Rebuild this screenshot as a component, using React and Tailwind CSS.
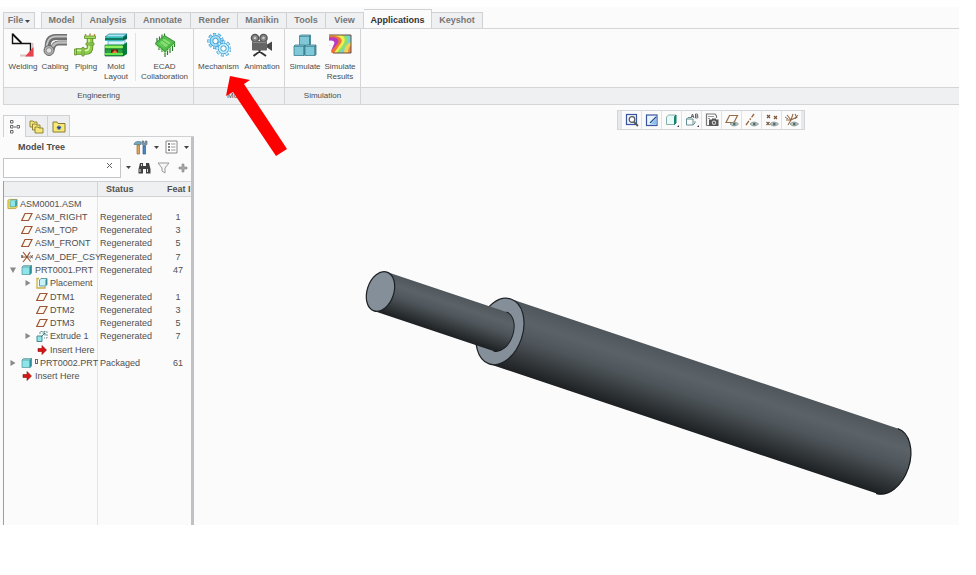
import React, { useState } from "react";

const ribbonTabs = [
  { name: "Model", width: "w-[41px]" },
  { name: "Analysis", width: "w-[53px]" },
  { name: "Annotate", width: "w-[56px]" },
  { name: "Render", width: "w-[47px]" },
  { name: "Manikin", width: "w-[49px]" },
  { name: "Tools", width: "w-[39px]" },
  { name: "View", width: "w-[38px]" },
  { name: "Applications", width: "w-[68px]" },
  { name: "Keyshot", width: "w-[51px]" },
];

const treeRows = [
  { level: 0, icon: "asm", name: "ASM0001.ASM", status: "", feat: "" },
  { level: 1, icon: "plane", name: "ASM_RIGHT", status: "Regenerated", feat: "1" },
  { level: 1, icon: "plane", name: "ASM_TOP", status: "Regenerated", feat: "3" },
  { level: 1, icon: "plane", name: "ASM_FRONT", status: "Regenerated", feat: "5" },
  { level: 1, icon: "csys", name: "ASM_DEF_CSY", status: "Regenerated", feat: "7" },
  { level: 1, icon: "part", name: "PRT0001.PRT", status: "Regenerated", feat: "47", open: true },
  { level: 2, icon: "placement", name: "Placement", status: "", feat: "", open: false },
  { level: 2, icon: "plane", name: "DTM1", status: "Regenerated", feat: "1" },
  { level: 2, icon: "plane", name: "DTM2", status: "Regenerated", feat: "3" },
  { level: 2, icon: "plane", name: "DTM3", status: "Regenerated", feat: "5" },
  { level: 2, icon: "extrude", name: "Extrude 1", status: "Regenerated", feat: "7", open: false },
  { level: 2, icon: "insert", name: "Insert Here", status: "", feat: "" },
  { level: 1, icon: "part", name: "PRT0002.PRT", status: "Packaged", feat: "61", open: false, packaged: true },
  { level: 1, icon: "insert", name: "Insert Here", status: "", feat: "" },
];

/* ---------- ribbon icons (24 x 24) ---------- */

const WeldingIcon = () => (
  <svg viewBox="0 0 24 24" className="h-6 w-6">
    <path d="M1.5 0.500V10.500H19.500V21" fill="none" stroke="#111" strokeWidth="1.400" />
    <path d="M1.500 1L10.500 10" stroke="#111" strokeWidth="1.800" />
    <path d="M21.500 10V22.500H9" fill="none" stroke="#d8c6c6" strokeWidth="2" />
    <path d="M22.500 14V23.500H14Z" fill="#e8434c" />
  </svg>
);

const CablingIcon = () => (
  <svg viewBox="0 0 24 24" className="h-6 w-6">
    <path d="M24 4H13C6 4 4.500 8 4.500 17" fill="none" stroke="#6e6e6e" strokeWidth="6" />
    <path d="M24 3.500H13C6 3.500 3.500 8 3.500 17" fill="none" stroke="#c4c4c4" strokeWidth="2" />
    <path d="M24 10H16C11.500 10 10 12.500 9 17" fill="none" stroke="#707070" strokeWidth="5" />
    <path d="M24 9.500H16C12 9.500 10 12 8 16" fill="none" stroke="#bdbdbd" strokeWidth="2.500" />
    <circle cx="6" cy="17.500" r="5" fill="#b0b0b0" stroke="#666" />
    <circle cx="6" cy="17.500" r="2.800" fill="#e1e1e1" stroke="#8b8b8b" />
  </svg>
);

const PipingIcon = () => (
  <svg viewBox="0 0 24 24" className="h-6 w-6">
    <path d="M2 18.500H12C15 18.500 16 17 16 14V4" fill="none" stroke="#5b8f2a" strokeWidth="6.500" />
    <path d="M2 18.500H12C15 18.500 16 17 16 14V4" fill="none" stroke="#8fcf4a" strokeWidth="4.800" />
    <path d="M2 17.500H12C14 17.500 15 16 15 14V4" fill="none" stroke="#d9f7a3" strokeWidth="1.500" />
    <path d="M10.500 3H21.500V5.500H10.500ZM12 10H20V12H12Z" fill="#a6dc62" stroke="#5b8f2a" strokeWidth=".8" />
    <path d="M.5 16H2.500V22H.5ZM8 14.500H10V23H8Z" fill="#a6dc62" stroke="#5b8f2a" strokeWidth=".8" />
    <path d="M11.500 1V3M20.500 1V3M16 .5V3" stroke="#b58a34" strokeWidth="1.400" />
  </svg>
);

const MoldIcon = () => (
  <svg viewBox="0 0 24 24" className="h-6 w-6">
    <path d="M1 4L5 1H23L19 4Z" fill="#a5e8f4" stroke="#087384" strokeWidth=".7" />
    <path d="M1 4H19V8H1Z" fill="#30c6c0" />
    <path d="M19 4L23 1V6L19 8Z" fill="#08706f" />
    <path d="M1 6H19L23 4" fill="none" stroke="#075e3e" strokeWidth="1.500" />
    <path d="M4 8H18L21 7V11L18 12H4Z" fill="#d5f3ff" stroke="#4793b0" strokeWidth=".6" />
    <path d="M1 12H19V16H1Z" fill="#5ee23f" stroke="#147929" strokeWidth=".7" />
    <path d="M19 12L23 9V21L19 23.500Z" fill="#087c39" />
    <path d="M1 16H19V23H1Z" fill="#27a344" stroke="#0b602e" strokeWidth=".7" />
    <path d="M1 14H19" stroke="#c4ff88" />
    <path d="M7 16.500H14V20H7Z" fill="#7a1f0c" />
    <path d="M8 20L11 17L14 20Z" fill="#e57b35" />
    <path d="M1 21H19" stroke="#6ce350" strokeWidth="2" />
  </svg>
);

const EcadIcon = () => (
  <svg viewBox="0 0 24 24" className="h-6 w-6">
    <path d="M4 10V5M6.500 8V3.500M9 6V1.500M11.500 4V0.500M6 14V17M9 16V19M12 17V24M14.500 16V22M17 14V20M19.500 12V18M21.500 9V14" stroke="#2d7b2d" strokeWidth="1.200" />
    <path d="M2 10.500L11.500 2.500L22 9L12 18.500Z" fill="#4fc04a" stroke="#2d7b2d" strokeWidth=".8" />
    <path d="M5.500 10.500L12 5L18.500 9L12 15Z" fill="#86e070" />
    <path d="M6 9L13 15M8.500 7L16 12M11 5L18 9.500" stroke="#3a9f3a" strokeWidth=".7" />
    <path d="M2.500 12L12 20L21.500 10.500" fill="none" stroke="#8ded76" strokeWidth=".9" />
  </svg>
);

const Gear = ({ cx, cy, r, fill }) => (
  <g>
    <circle cx={cx} cy={cy} r={r} fill="none" stroke="#3f9fd3" strokeWidth="3.400" strokeDasharray="2.900 1.700" />
    <circle cx={cx} cy={cy} r={r - 1} fill={fill} stroke="#3f9fd3" strokeWidth="1" />
    <circle cx={cx} cy={cy} r={r} fill="none" stroke={fill} strokeWidth="2" strokeDasharray="2 2.600" strokeDashoffset="-.4" />
    <circle cx={cx} cy={cy} r="2.700" fill="#fbfbfb" stroke="#3f9fd3" strokeWidth="1" />
  </g>
);

const MechanismIcon = () => (
  <svg viewBox="0 0 24 24" className="h-6 w-6">
    <Gear cx={8.5} cy={8} r={6.5} fill="#a3dcf6" />
    <Gear cx={16.5} cy={15.5} r={6.3} fill="#c8effd" />
  </svg>
);

const AnimationIcon = () => (
  <svg viewBox="0 0 24 24" className="h-6 w-6">
    <circle cx="5" cy="5" r="3.600" fill="#858585" stroke="#555" strokeWidth="1.400" />
    <circle cx="13.500" cy="5" r="3.600" fill="#858585" stroke="#555" strokeWidth="1.400" />
    <circle cx="5" cy="5" r="1.300" fill="#ccc" />
    <circle cx="13.500" cy="5" r="1.300" fill="#ccc" />
    <rect x="2" y="8" width="15" height="9.500" rx="1" fill="#666" />
    <path d="M3 9.500H16" stroke="#8b8b8b" />
    <path d="M17 11.500L22 8.500V18L17 14.500Z" fill="#484848" />
    <path d="M9.500 17V20M9.500 18.500L3.500 23M9.500 18.500L16 23" stroke="#333" strokeWidth="2" />
  </svg>
);

const Block = ({ x, y }) => (
  <g stroke="#3b7f8f" strokeWidth=".8">
    <path d={`M${x} ${y + 1}h10v9.500h-10z`} fill="#7fc8d8" />
    <path d={`M${x} ${y + 1}l1 -1h10l-1 1z`} fill="#c3ecf4" />
    <path d={`M${x + 10} ${y + 1}l1 -1v9.500l-1 1z`} fill="#4f9dae" />
  </g>
);

const SimulateIcon = () => (
  <svg viewBox="0 0 24 24" className="h-6 w-6">
    <Block x={6.5} y={2} />
    <Block x={1} y={12} />
    <Block x={12} y={12} />
  </svg>
);

const ResultsIcon = () => (
  <svg viewBox="0 0 24 24" className="h-6 w-6">
    <clipPath id="resultsFrame">
      <rect x="1" y="2" width="22" height="18" />
    </clipPath>
    <g clipPath="url(#resultsFrame)">
      <rect x="1" y="2" width="22" height="18" fill="#6fd3de" />
      <path d="M0 2H17C25 8 16 14 11 21H0Z" fill="#8ee06a" />
      <path d="M0 2H14C21 8 13 13 8 21H0Z" fill="#f3ed52" />
      <path d="M0 3C9 2 16 5 13 10L6 20L0 21Z" fill="#ef7434" />
      <path d="M0 5C7 3 12 6 10 10L6 15L0 20Z" fill="#b93cc0" />
      <path d="M0 8C6 6 8 10 5 12L0 13Z" fill="#fbfbfb" />
      <path d="M0 13L6 11L3 18L4 21H0Z" fill="#fbfbfb" />
      <path d="M16 20C16 13 20 10 24 9V20Z" fill="#f0d455" />
      <path d="M20 20C20 16 21 13 24 12V20Z" fill="#e88a4d" />
    </g>
    <path d="M1 2H23V20H5" fill="none" stroke="#6d4a3c" strokeWidth="1" />
  </svg>
);

/* ---------- model tree icons (12 x 12) ---------- */

const TreeIcon = ({ type }) => {
  const size = type === "asm" ? "h-3 w-[11px] shrink-0" : "h-3 w-3 shrink-0";
  return (
    <svg viewBox="0 0 12 12" className={size}>
      {type === "asm" && (
        <>
          <path d="M1 2L2.500 1H11V9.500L9.500 11H1Z" fill="#f2e064" stroke="#a8942e" strokeWidth=".8" />
          <path d="M3.500 3L5 1.500H10.500V7.500L9 9H3.500Z" fill="#8fe6ea" stroke="#3d9aa0" strokeWidth=".7" />
          <path d="M9 3L10.500 1.500V7.500L9 9Z" fill="#2f8f98" />
        </>
      )}
      {type === "plane" && <path d="M4 2.500H11L7.500 9.500H0.700Z" fill="#fff9f2" stroke="#9a5636" strokeWidth="1.200" />}
      {type === "csys" && (
        <>
          <path d="M6 6L2 1M6 6L9 1M6 6L2 11M6 6L9.500 10.500M6 6H1" stroke="#a3572f" strokeWidth="1.200" />
          <path d="M5 6H10M9.500 4L12 7.500M12 4L9.500 7.500M0 4L2 7M0 7L2 4" stroke="#5a4a43" strokeWidth=".8" />
        </>
      )}
      {type === "part" && (
        <>
          <path d="M1 3L2.500 1.500H10.500L9 3Z" fill="#d5fbfb" stroke="#4a979c" strokeWidth=".7" />
          <path d="M1 3H9V10.500H1Z" fill="#8ee4e8" stroke="#4a979c" strokeWidth=".7" />
          <path d="M9 3L10.500 1.500V9L9 10.500Z" fill="#2f8f98" stroke="#2f8f98" strokeWidth=".7" />
        </>
      )}
      {type === "placement" && (
        <>
          <path d="M3 1.500H1V11H9V9.500" fill="none" stroke="#cdb044" strokeWidth="1.300" />
          <path d="M3.500 3L5 1.500H11V7.500L9.500 9H3.500Z" fill="#c8f2f7" stroke="#3d8a94" strokeWidth=".8" />
          <path d="M9.500 3L11 1.500V7.500L9.500 9Z" fill="#3d8a94" />
        </>
      )}
      {type === "extrude" && (
        <>
          <path d="M1 6H6V11.500H1Z" fill="#92e4e8" stroke="#4a8c90" />
          <path d="M4 4V1.500H11V8H8" fill="none" stroke="#6b8f93" strokeDasharray="2 1" />
          <path d="M5 7L9 3M6.500 3H9V5.500" fill="none" stroke="#3a7f84" />
        </>
      )}
      {type === "insert" && <path d="M2 4.500H6V1.500L10.500 6L6 10.500V7.500H2Z" fill="#d81414" stroke="#8c0d0d" strokeWidth=".6" />}
    </svg>
  );
};

/* ---------- graphics toolbar icons (14 x 14) ---------- */

const Eye = () => (
  <g>
    <path d="M5 11C7 8.500 11 8.500 13.500 11C11 13.500 7 13.500 5 11Z" fill="#b9c6c4" stroke="#7c8d8b" strokeWidth=".8" />
    <circle cx="9.300" cy="11" r="1.300" fill="#4d6664" />
  </g>
);

const viewTools = [
  {
    label: "Refit",
    art: (
      <>
        <rect x="1.500" y="1.500" width="10" height="10" fill="#eef4ff" stroke="#3c55a0" strokeWidth="1.200" />
        <circle cx="7" cy="6.500" r="2.800" fill="#fff" stroke="#555" strokeWidth="1.200" />
        <path d="M9 9L13 13" stroke="#555" strokeWidth="1.800" />
      </>
    ),
  },
  {
    label: "Repaint",
    art: (
      <>
        <rect x="1.500" y="2" width="10.500" height="10.500" fill="#eaf4ff" stroke="#3c55a0" strokeWidth="1.200" />
        <path d="M3 11.500L6 11L11.500 5V11.500Z" fill="#8bbfeb" />
        <path d="M5 10L11 4" stroke="#264e8e" strokeWidth="1.200" />
      </>
    ),
  },
  {
    label: "Display Style",
    art: (
      <>
        <path d="M1.500 4L3.500 2H11L9.500 4V11.500H1.500Z" fill="#e6faf7" stroke="#739c98" strokeWidth=".8" />
        <path d="M9.500 4L11 2V10L9.500 11.500Z" fill="#16836f" stroke="#16836f" />
        <path d="M14 12V14H12Z" fill="#333" />
      </>
    ),
  },
  {
    label: "Saved Orientations",
    art: (
      <>
        <path d="M1.500 6L3 4.500H6M1.500 6H8V12H1.500ZM8 12L10 10V8" fill="none" stroke="#638e91" />
        <path d="M6 5L7.500 1L9 5M6.500 3.500H8.500M10.500 1V5H12C13.500 5 13.500 3 12 3H10.500M10.500 1H12C13 1 13 3 12 3" fill="none" stroke="#444" strokeWidth=".8" />
        <path d="M14 12V14H12Z" fill="#333" />
      </>
    ),
  },
  {
    label: "View Manager",
    art: (
      <>
        <path d="M1.500 12.500V1H10L11.500 3V5M1.500 12.500H4" fill="none" stroke="#777" strokeWidth="1.200" />
        <path d="M3 3.500H9M3 5.500H5" stroke="#999" />
        <rect x="4" y="6.500" width="9.500" height="6.500" fill="#555" />
        <rect x="7" y="5.500" width="4" height="1.500" fill="#555" />
        <circle cx="9" cy="9.800" r="2.200" fill="#ccc" />
        <circle cx="9" cy="9.800" r="1" fill="#454545" />
      </>
    ),
  },
  {
    label: "Plane Display",
    art: (
      <>
        <path d="M4.500 2.500H12.500L9 9.500H1Z" fill="none" stroke="#9a6a42" strokeWidth="1.200" />
        <Eye />
      </>
    ),
  },
  {
    label: "Axis Display",
    art: (
      <>
        <path d="M1 12L9 1" stroke="#9a6a42" strokeWidth="1.400" strokeDasharray="5 1.500 1.500 1.500" />
        <Eye />
      </>
    ),
  },
  {
    label: "Point Display",
    art: (
      <>
        <path d="M2 2L5 5M5 2L2 5M9 3L12 6M12 3L9 6M1.500 9L4.500 12M4.500 9L1.500 12" stroke="#7d5238" strokeWidth="1.200" />
        <Eye />
      </>
    ),
  },
  {
    label: "Csys Display",
    art: (
      <>
        <path d="M6 7L2 2M6 7L8 1M6 7H1M6 7L3 12M6 7L12 4M10 1L12 5" stroke="#9a6a42" strokeWidth="1.100" />
        <path d="M0 4L3 6M10 6L13 2" stroke="#555" strokeWidth=".8" />
        <Eye />
      </>
    ),
  },
];

const RibbonButton = ({ icon, label, width }) => (
  <button type="button" className={`${width} flex shrink-0 flex-col items-center`}>
    {icon}
    <span className="mt-[5px] text-center text-[8px] leading-[10px] text-[#4c4c4c]">{label}</span>
  </button>
);

const RibbonGroup = ({ title, width, children }) => (
  <section className={`${width} flex shrink-0 flex-col border-r border-[#d3d5d7]`}>
    <div className="flex h-[58px] items-start pt-1">{children}</div>
    <h2 className="h-[17px] border-t border-[#d3d5d7] bg-[#eff0f2] text-center text-[8px] leading-4 text-[#4c4c4c]">{title}</h2>
  </section>
);

const Caret = () => (
  <svg viewBox="0 0 5 3" className="h-[3px] w-[5px]">
    <path d="M0 0H5L2.500 3Z" fill="#444" />
  </svg>
);

const Ribbon = ({ activeTab, setActiveTab }) => (
  <header>
    <nav className="flex h-[21px] items-end">
      <button type="button" className="flex h-4 w-8 shrink-0 items-center justify-center gap-[2px] border border-b-0 border-[#cfd1d3] bg-[#eff0f2] pt-px text-[9px] font-bold text-[#777]">
        File
        <Caret />
      </button>
      <div className="ml-[6px] flex items-end">
        {ribbonTabs.map(tab => (
          <button
            key={tab.name}
            type="button"
            onClick={() => setActiveTab(tab.name)}
            className={`${tab.width} shrink-0 border-t border-r border-[#cfd1d3] text-center text-[9px] font-bold first:border-l ${
              tab.name === activeTab ? "h-[19px] bg-[#fbfbfb] pt-[3px] text-[#333]" : "h-4 bg-[#eff0f2] pt-px text-[#777]"
            }`}
          >
            {tab.name}
          </button>
        ))}
      </div>
    </nav>
    <div className="flex border-y border-l border-[#d3d5d7]">
      <RibbonGroup title="Engineering" width="w-[190px]">
        <div className="flex pl-[3px]">
          <RibbonButton icon={<WeldingIcon />} label="Welding" width="w-8" />
          <RibbonButton icon={<CablingIcon />} label="Cabling" width="w-8" />
          <RibbonButton icon={<PipingIcon />} label="Piping" width="w-[30px]" />
          <RibbonButton icon={<MoldIcon />} label="Mold Layout" width="w-[30px]" />
          <div className="ml-1 h-12 w-px bg-[#e2e3e5]" />
          <RibbonButton icon={<EcadIcon />} label="ECAD Collaboration" width="w-[57px]" />
        </div>
      </RibbonGroup>
      <RibbonGroup title="Motion" width="w-[91px]">
        <div className="flex pl-[2px]">
          <RibbonButton icon={<MechanismIcon />} label="Mechanism" width="w-[45px]" />
          <RibbonButton icon={<AnimationIcon />} label="Animation" width="w-[42px]" />
        </div>
      </RibbonGroup>
      <RibbonGroup title="Simulation" width="w-[76px]">
        <div className="flex pl-1">
          <RibbonButton icon={<SimulateIcon />} label="Simulate" width="w-8" />
          <RibbonButton icon={<ResultsIcon />} label="Simulate Results" width="w-[38px]" />
        </div>
      </RibbonGroup>
      <div className="flex flex-1 flex-col justify-end">
        <div className="h-[17px] border-t border-[#d3d5d7] bg-[#eff0f2]" />
      </div>
    </div>
  </header>
);

const PanelTabs = () => (
  <div className="flex h-[22px] items-stretch">
    <button type="button" aria-label="Model Tree" className="flex w-[22px] items-center justify-center border-t border-l border-[#cfd1d3]">
      <svg viewBox="0 0 12 14" className="h-[14px] w-3">
        <path d="M1.500 .5H4V3H1.500ZM1.500 5.500H4V8H1.500ZM1.500 10.500H4V13H1.500ZM8 5.500H10.500V8H8ZM5 7H7" fill="none" stroke="#666" />
      </svg>
    </button>
    <button type="button" aria-label="Folder Browser" className="flex w-[23px] items-center justify-center border border-[#cfd1d3] bg-[#eceef0]">
      <svg viewBox="0 0 15 15" className="h-[15px] w-[15px]">
        <g fill="#f4e678" stroke="#8a7a2e" strokeWidth=".9">
          <path d="M1 2H4L5 3H8V8H1Z" />
          <path d="M3.500 5H6.500L7.500 6H11V11H3.500Z" />
          <path d="M6 8H9L10 9H14V14H6Z" />
        </g>
      </svg>
    </button>
    <button type="button" aria-label="Favorites" className="flex w-[22px] items-center justify-center border border-l-0 border-[#cfd1d3] bg-[#eceef0]">
      <svg viewBox="0 0 14 13" className="h-[13px] w-[14px]">
        <path d="M1 2H5L6 3.500H13V12H1Z" fill="#f7ea78" stroke="#8a7a2e" />
        <path d="M7 5.500V10M4.800 7.700H9.200M5.500 6.200L8.500 9.200M8.500 6.200L5.500 9.200" stroke="#1b3f9c" />
      </svg>
    </button>
    <div className="flex-1 border-b border-[#cfd1d3]" />
  </div>
);

const PanelTools = () => (
  <div className="flex flex-col">
    <div className="flex h-5 items-center pl-[15px]">
      <h2 className="flex-1 pt-px text-[9px] font-bold text-[#4c4c4c]">Model Tree</h2>
      <button type="button" aria-label="Settings" className="flex items-center gap-[6px]">
        <svg viewBox="0 0 15 15" className="h-[15px] w-[15px]">
          <path d="M1 4C2 1.500 5 1 8 2V4.500H1Z" fill="#78a8bd" stroke="#5b8296" strokeWidth=".8" />
          <path d="M4 5H6.500V14H4Z" fill="#e5a25a" stroke="#9a6a3a" strokeWidth=".7" />
          <path d="M9 1V4.500L11 6L14 4.500V1L12.300 1V3H10.700V1Z" fill="#8299a8" stroke="#5a7080" strokeWidth=".7" />
          <path d="M10 6H12.500V14H10Z" fill="#4a86c2" stroke="#2f5f98" strokeWidth=".7" />
        </svg>
        <Caret />
      </button>
      <button type="button" aria-label="Show" className="ml-[6px] mr-[2px] flex items-center gap-[6px]">
        <svg viewBox="0 0 13 14" className="h-[14px] w-[13px]">
          <path d="M1 1H12V13H1Z" fill="#fff" stroke="#888" />
          <path d="M3 4H5M3 7H5M3 10H5" stroke="#555" strokeWidth="1.400" />
          <path d="M6 4H10.500M6 7H10.500M6 10H10.500" stroke="#999" />
        </svg>
        <Caret />
      </button>
    </div>
    <div className="flex h-[21px] items-center">
      <div className="flex h-5 w-[118px] items-center border border-[#c3c5c7] bg-white pr-[7px]">
        <input type="text" aria-label="Search model tree" className="h-full min-w-0 flex-1 px-1 text-[9px] outline-none" />
        <button type="button" aria-label="Clear search" className="pb-1">
          <svg viewBox="0 0 7 7" className="h-[7px] w-[7px]">
            <path d="M1 1L6 6M6 1L1 6" stroke="#666" />
          </svg>
        </button>
      </div>
      <button type="button" aria-label="Search options" className="ml-[5px]">
        <Caret />
      </button>
      <button type="button" aria-label="Find" className="ml-[7px]">
        <svg viewBox="0 0 13 12" className="h-3 w-[13px]">
          <path d="M2 1H5V4H8V1H11L12.500 7V11.500H8V7H5V11.500H.5V7Z" fill="#404040" />
          <path d="M2 7V10M9.500 7V10M3.500 2V4" stroke="#ddd" />
        </svg>
      </button>
      <button type="button" aria-label="Filter" className="ml-[6px]">
        <svg viewBox="0 0 13 12" className="h-3 w-[13px]">
          <path d="M1 1H12L8 6V11L5 9V6Z" fill="#f6f6f6" stroke="#999" />
        </svg>
      </button>
      <button type="button" aria-label="Add" className="ml-2">
        <svg viewBox="0 0 10 10" className="h-[10px] w-[10px]">
          <path d="M4 1H6V4H9V6H6V9H4V6H1V4H4Z" fill="#a6a6a6" stroke="#888" strokeWidth=".6" />
        </svg>
      </button>
    </div>
  </div>
);

const Expander = ({ open }) => {
  if (open === undefined) return <span className="w-[10px] shrink-0" />;
  return (
    <button type="button" aria-expanded={open} aria-label="Toggle" className="flex w-[10px] shrink-0 justify-center">
      <svg viewBox="0 0 8 8" className="h-2 w-2">
        <path d={open ? "M1 1.500H7L4 7Z" : "M1.500 1V7L6.500 4Z"} fill="#888" />
      </svg>
    </button>
  );
};

const levelPadding = ["pl-[3px]", "pl-1", "pl-[19px]"];

const ModelTree = () => (
  <div className="mt-[3px] flex flex-1 flex-col border-l border-[#9c9ea0]">
    <table className="h-[202px] w-full table-fixed border-separate border-spacing-0 text-[9px] leading-3 text-[#505050]">
      <thead>
        <tr className="h-4 bg-[#eff0f2] text-left">
          <th className="w-[94px] border-y border-r border-[#d0d2d4] p-0" aria-label="Name" />
          <th className="border-y border-[#d0d2d4] p-0 pl-2">Status</th>
          <th className="w-[26px] border-y border-[#d0d2d4] p-0 pl-[2px] whitespace-nowrap">Feat I</th>
        </tr>
      </thead>
      <tbody>
        {treeRows.map((row, i) => (
          <tr key={i}>
            <td className="border-r border-[#e2e3e5] p-0">
              <div className={`${levelPadding[row.level]} flex items-center whitespace-nowrap`}>
                {row.level > 0 && <Expander open={row.open} />}
                <span className={row.level > 0 ? "ml-[3px] flex items-center gap-[2px]" : "flex items-center gap-[2px]"}>
                  <TreeIcon type={row.icon} />
                  {row.packaged && <span className="mb-1 h-[5px] w-[3px] border border-[#666]" />}
                  {row.name}
                </span>
              </div>
            </td>
            <td className="p-0 pl-[2px]">{row.status}</td>
            <td className="p-0 text-center">{row.feat}</td>
          </tr>
        ))}
      </tbody>
    </table>
    <div className="w-[94px] flex-1 border-r border-[#e2e3e5]" />
  </div>
);

// everything is drawn along the x axis and then turned to the view angle
const Shaft = () => (
  <svg viewBox="194 105 765 420" className="block h-full w-full" role="img" aria-label="Shaft assembly">
    <defs>
      <linearGradient id="steel" x1="0" y1="0" x2="0" y2="1">
        <stop offset="0" stopColor="#50575c" />
        <stop offset=".25" stopColor="#5b6369" />
        <stop offset=".5" stopColor="#4f565b" />
        <stop offset=".75" stopColor="#363b3e" />
        <stop offset="1" stopColor="#1d2022" />
      </linearGradient>
    </defs>
    <g transform="translate(380.500 291.500) rotate(18.500)">
      <path d="M126 -34.200H534A22.600 34.200 0 0 1 534 34.200H126Z" fill="url(#steel)" />
      <path d="M534 -34.200A22.600 34.200 0 0 1 534 34.200" fill="none" stroke="#16191b" strokeWidth="1.200" />
      <ellipse cx="126" cy="0" rx="22.600" ry="34.200" fill="#848f99" stroke="#1d2124" strokeWidth="1.200" />
      <path d="M0 -20.500H126A13.300 20.500 0 0 1 126 20.500H0Z" fill="url(#steel)" />
      <path d="M126 -20.500A13.300 20.500 0 0 1 126 20.500" fill="none" stroke="#1d2124" />
      <ellipse cx="0" cy="0" rx="13.300" ry="20.500" fill="#848f99" stroke="#1d2124" strokeWidth="1.200" />
    </g>
  </svg>
);

const ViewToolbar = () => (
  <div className="absolute top-[5px] left-[423px] flex h-5 border border-[#d3d6d8] bg-[#e6e9eb] px-[3px]">
    {viewTools.map(tool => (
      <button key={tool.label} type="button" aria-label={tool.label} className="flex w-5 items-center justify-center border-l border-[#dfe1e3] bg-[#fbfbfb]">
        <svg viewBox="0 0 14 14" className="h-[14px] w-[14px]">
          {tool.art}
        </svg>
      </button>
    ))}
  </div>
);

const App = () => {
  const [activeTab, setActiveTab] = useState("Applications");

  return (
    <div className="relative flex min-h-screen flex-col bg-white pt-[7px] pr-[17px] pb-[50px] font-['Liberation_Sans',Arial,sans-serif]">
      <div className="flex flex-1 flex-col bg-[#fbfbfb] pl-[3px]">
        <Ribbon activeTab={activeTab} setActiveTab={setActiveTab} />
        <div className="flex flex-1">
          <aside className="flex w-[191px] shrink-0 flex-col pt-[10px]">
            <PanelTabs />
            <div className="flex flex-1 flex-col border-r-[3px] border-[#c0c1c4]">
              <PanelTools />
              <ModelTree />
            </div>
          </aside>
          <main className="relative min-w-0 flex-1">
            <Shaft />
            <ViewToolbar />
          </main>
        </div>
      </div>
      <svg viewBox="0 0 62 81" className="pointer-events-none absolute top-[76px] left-[226px] h-[81px] w-[62px]" aria-hidden="true">
        <path d="M4 0L24 4L18 8L61 73L50 80L7 16L0 20Z" fill="#fe0000" />
      </svg>
    </div>
  );
};

export default App;
